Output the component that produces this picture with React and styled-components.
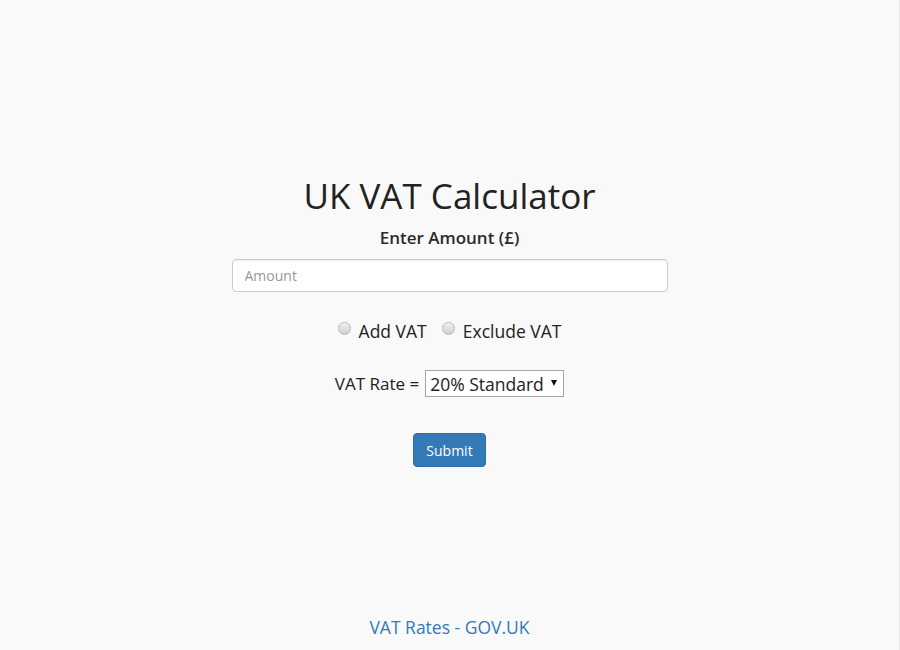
import React from "react";
import styled, { createGlobalStyle } from "styled-components";

const Global = createGlobalStyle`
  html, body { margin: 0; padding: 0; background: #f9f9f9; }
  body { font-family: "Open Sans", "Noto Sans", sans-serif; color: #222; }
  * { box-sizing: border-box; }
`;

const Page = styled.div`
  height: 650px;
  border-right: 1px solid #ebebeb;
  display: flex;
  flex-direction: column;
  align-items: center;
  padding-top: 172px;
`;

const Title = styled.h1`
  margin: 0;
  font-size: 35px;
  font-weight: 400;
  line-height: 48px;
  color: #222;
`;

const Label = styled.label`
  margin-top: 6px;
  font-size: 17px;
  font-weight: 600;
  line-height: 24px;
  color: #2a2a2a;
`;

const AmountInput = styled.input`
  margin-top: 9px;
  width: 436px;
  height: 33px;
  padding: 6px 12px;
  font-family: inherit;
  font-size: 14px;
  color: #555;
  background: #fff;
  border: 1px solid #ccc;
  border-radius: 4px;
  box-shadow: inset 0 1px 1px rgba(0,0,0,0.075);
  outline: none;
  &::placeholder { color: #999; }
`;

const RadioRow = styled.div`
  margin-top: 27px;
  display: flex;
  align-items: center;
  gap: 15px;
  font-size: 17.5px;
  line-height: 24px;
`;

const RadioLabel = styled.label`
  display: flex;
  align-items: center;
  gap: 8px;
  color: #222;
`;

const Radio = styled.input`
  appearance: none;
  margin: 0;
  width: 13px;
  height: 13px;
  border-radius: 50%;
  border: 1px solid #b5b5b5;
  background: linear-gradient(#f2f2f2, #cfcfcf);
  position: relative;
  top: -3px;
`;

const RateRow = styled.div`
  margin-top: 27px;
  display: flex;
  align-items: center;
  gap: 6px;
  font-size: 17px;
  color: #222;
`;

const SelectWrap = styled.span`
  position: relative;
  display: inline-flex;
`;

const Select = styled.select`
  appearance: none;
  width: 139px;
  height: 27px;
  padding: 0 20px 0 4px;
  font-family: inherit;
  font-size: 17.5px;
  color: #222;
  background: #fff;
  border: 1px solid #a6a6a6;
  border-radius: 0;
  outline: none;
`;

const Arrow = styled.span`
  position: absolute;
  right: 7px;
  top: 10px;
  width: 0;
  height: 0;
  border-left: 3.5px solid transparent;
  border-right: 3.5px solid transparent;
  border-top: 6px solid #111;
  pointer-events: none;
`;

const Submit = styled.button`
  margin-top: 36px;
  width: 73px;
  height: 34px;
  font-family: inherit;
  font-size: 14px;
  color: #fff;
  background: #337ab7;
  border: 1px solid #2e6da4;
  border-radius: 4px;
  cursor: pointer;
`;

const Spacer = styled.div`
  flex: 1;
`;

const Link = styled.a`
  margin-bottom: 11px;
  font-size: 17.5px;
  line-height: 24px;
  color: #337ab7;
  text-decoration: none;
`;

export default function App() {
  return (
    <>
      <Global />
      <Page>
        <Title>UK VAT Calculator</Title>
        <Label htmlFor="amount">Enter Amount (£)</Label>
        <AmountInput id="amount" placeholder="Amount" />
        <RadioRow>
          <RadioLabel>
            <Radio type="radio" name="mode" />
            Add VAT
          </RadioLabel>
          <RadioLabel>
            <Radio type="radio" name="mode" />
            Exclude VAT
          </RadioLabel>
        </RadioRow>
        <RateRow>
          VAT Rate =
          <SelectWrap>
            <Select defaultValue="20">
              <option value="20">20% Standard</option>
              <option value="5">5% Reduced</option>
              <option value="0">0% Zero</option>
            </Select>
            <Arrow />
          </SelectWrap>
        </RateRow>
        <Submit>Submit</Submit>
        <Spacer />
        <Link href="#">VAT Rates - GOV.UK</Link>
      </Page>
    </>
  );
}
